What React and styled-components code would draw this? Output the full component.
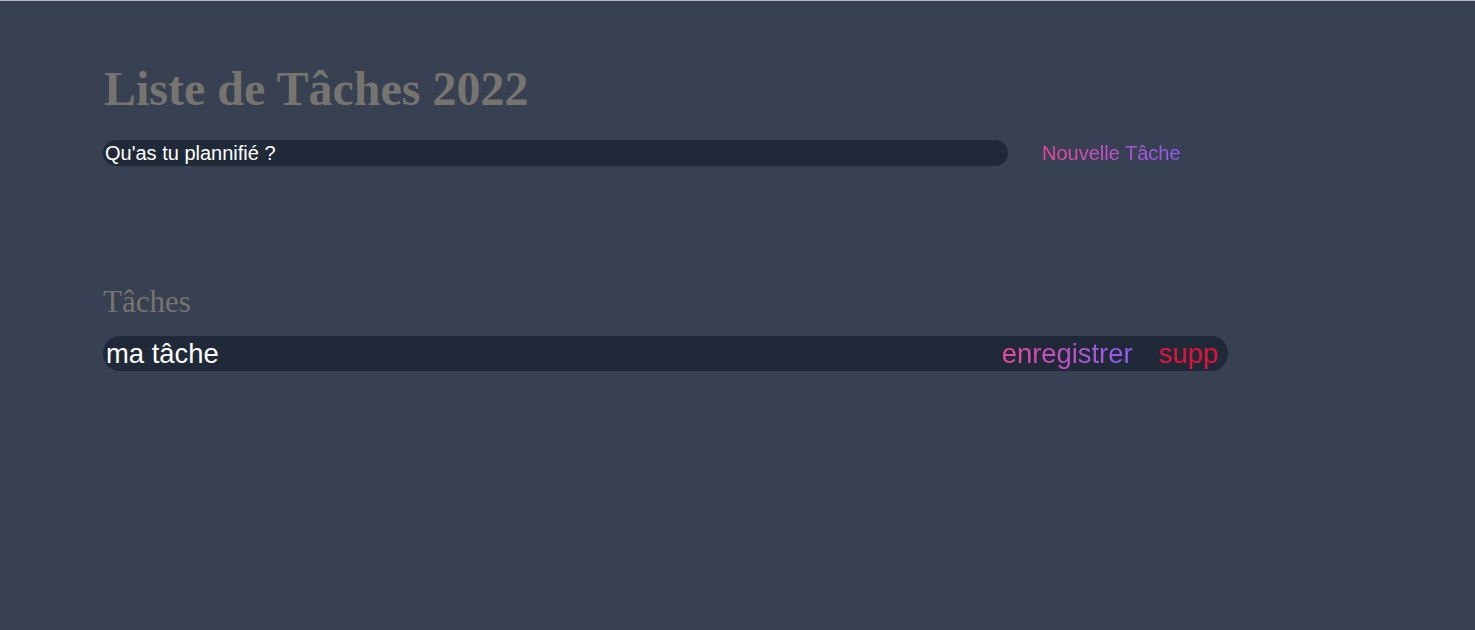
import React from "react";
import styled, { createGlobalStyle } from "styled-components";

const Global = createGlobalStyle`
  html, body { margin: 0; padding: 0; }
  body {
    background: #374151;
    min-height: 630px;
    border-top: 1px solid #b8b8b8;
    box-sizing: border-box;
    font-family: "Liberation Sans", Arial, sans-serif;
  }
`;

const Page = styled.main`
  padding: 62px 0 0 104px;
  width: 1125px;
`;

const Title = styled.h1`
  margin: 0;
  font-family: "Liberation Serif", "Times New Roman", serif;
  font-weight: 700;
  font-size: 48px;
  line-height: 52px;
  color: #76746f;
`;

const Form = styled.form`
  display: flex;
  align-items: center;
  margin-top: 25px;
`;

const Input = styled.input`
  width: 905px;
  height: 26px;
  box-sizing: border-box;
  border: none;
  outline: none;
  border-radius: 13px;
  background: #1f2937;
  color: #ffffff;
  font-family: "Liberation Sans", Arial, sans-serif;
  font-size: 20px;
  padding: 0 2px;
  margin-left: -1px;
  &::placeholder { color: #ffffff; }
`;

const GradientText = styled.span`
  background: linear-gradient(90deg, #ec4899, #8b5cf6);
  -webkit-background-clip: text;
  background-clip: text;
  color: transparent;
`;

const NewButton = styled.button`
  border: none;
  background: none;
  padding: 0;
  margin-left: 34px;
  font-family: "Liberation Sans", Arial, sans-serif;
  font-size: 20px;
  cursor: pointer;
`;

const Section = styled.section`
  margin-top: 118px;
`;

const SubTitle = styled.h2`
  margin: 0;
  font-family: "Liberation Serif", "Times New Roman", serif;
  font-weight: 400;
  font-size: 31px;
  line-height: 36px;
  color: #76746f;
  margin-left: -1px;
`;

const TaskRow = styled.div`
  display: flex;
  align-items: center;
  margin-top: 16px;
  margin-left: -1px;
  height: 35px;
  width: 1125px;
  border-radius: 17px;
  background: #1f2937;
  padding: 0 10px 0 3px;
  box-sizing: border-box;
  font-family: "Liberation Sans", Arial, sans-serif;
  font-size: 27.4px;
`;

const TaskText = styled.span`
  flex: 1;
  color: #ffffff;
`;

const Action = styled.button`
  border: none;
  background: none;
  padding: 0;
  font-family: inherit;
  font-size: 27.4px;
  cursor: pointer;
  color: ${(p) => p.$color || "inherit"};
  margin-left: ${(p) => p.$gap || 0}px;
`;

export default function App() {
  return (
    <>
      <Global />
      <Page>
        <Title>Liste de Tâches 2022</Title>
        <Form onSubmit={(e) => e.preventDefault()}>
          <Input placeholder="Qu'as tu plannifié ?" />
          <NewButton type="submit">
            <GradientText>Nouvelle Tâche</GradientText>
          </NewButton>
        </Form>
        <Section>
          <SubTitle>Tâches</SubTitle>
          <TaskRow>
            <TaskText>ma tâche</TaskText>
            <Action>
              <GradientText>enregistrer</GradientText>
            </Action>
            <Action $color="#dc143c" $gap={26}>supp</Action>
          </TaskRow>
        </Section>
      </Page>
    </>
  );
}
